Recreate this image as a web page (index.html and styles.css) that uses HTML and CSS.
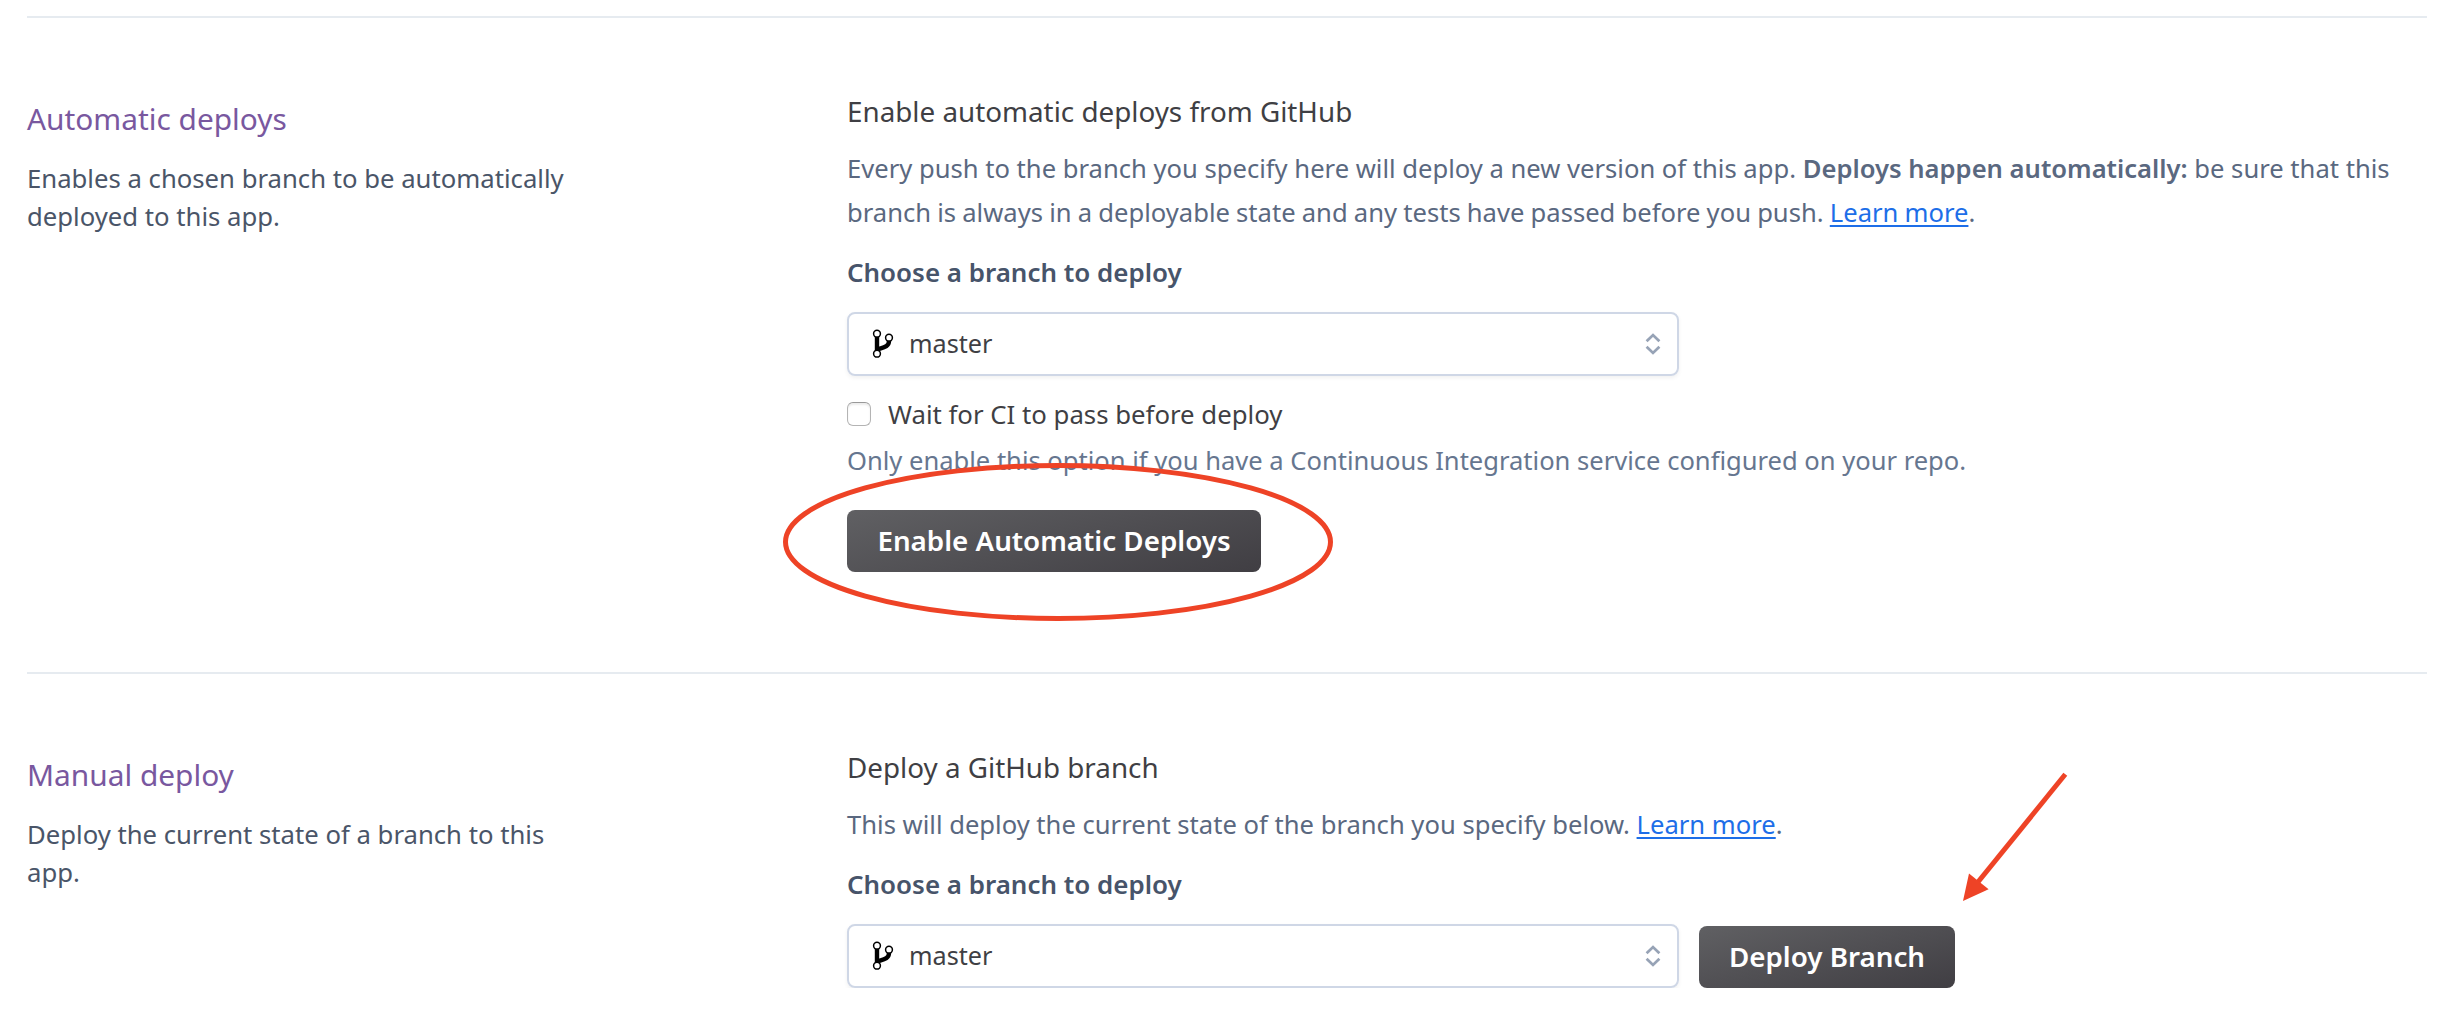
FILE: index.html
```html
<!DOCTYPE html>
<html lang="en">
<head>
<meta charset="utf-8">
<title>Deploy settings</title>
<link rel="stylesheet" href="styles.css">
</head>
<body>
<main class="page">
  <section class="panel">
    <div class="intro">
      <h2 class="title">Automatic deploys</h2>
      <p class="summary">Enables a chosen branch to be automatically<br>deployed to this app.</p>
    </div>
    <div class="content">
      <h3 class="heading">Enable automatic deploys from GitHub</h3>
      <p class="text">Every push to the branch you specify here will deploy a new version of this app. <strong>Deploys happen automatically:</strong> be sure that this<br><span class="tight">branch is always in a deployable state and any tests have passed before you push. <a class="link" href="#">Learn more</a>.</span></p>
      <div class="label">Choose a branch to deploy</div>
      <div class="select">
        <svg class="branch" width="22" height="30" viewBox="0 0 22 30">
          <path d="M5 7.5V22M17 12C17 18 11 18.500 5 20.500" fill="none" stroke="#000" stroke-width="4.400"/>
          <g fill="#fff" stroke="#000" stroke-width="1.500"><circle cx="5" cy="4.700" r="3.400"/><circle cx="17" cy="8.700" r="3.400"/><circle cx="5" cy="24.700" r="3.400"/></g>
        </svg>
        <span class="value">master</span>
        <svg class="arrows" width="16" height="22" viewBox="0 0 16 22"><path d="M1.600 8.200 8 2.100l6.400 6.100M1.600 13.800 8 19.900l6.400-6.100" fill="none" stroke="#97a3b6" stroke-width="2.800"/></svg>
      </div>
      <label class="check"><input class="box" type="checkbox">Wait for CI to pass before deploy</label>
      <p class="help">Only enable this option if you have a Continuous Integration service configured on your repo.</p>
      <button class="button wide">Enable Automatic Deploys</button>
    </div>
  </section>
  <section class="panel last">
    <div class="intro">
      <h2 class="title">Manual deploy</h2>
      <p class="summary">Deploy the current state of a branch to this<br>app.</p>
    </div>
    <div class="content">
      <h3 class="heading">Deploy a GitHub branch</h3>
      <p class="text">This will deploy the current state of the branch you specify below. <a class="link" href="#">Learn more</a>.</p>
      <div class="label">Choose a branch to deploy</div>
      <div class="row">
        <div class="select">
          <svg class="branch" width="22" height="30" viewBox="0 0 22 30">
            <path d="M5 7.5V22M17 12C17 18 11 18.500 5 20.500" fill="none" stroke="#000" stroke-width="4.400"/>
            <g fill="#fff" stroke="#000" stroke-width="1.500"><circle cx="5" cy="4.700" r="3.400"/><circle cx="17" cy="8.700" r="3.400"/><circle cx="5" cy="24.700" r="3.400"/></g>
          </svg>
          <span class="value">master</span>
          <svg class="arrows" width="16" height="22" viewBox="0 0 16 22"><path d="M1.600 8.200 8 2.100l6.400 6.100M1.600 13.800 8 19.900l6.400-6.100" fill="none" stroke="#97a3b6" stroke-width="2.800"/></svg>
        </div>
        <button class="button">Deploy Branch</button>
      </div>
    </div>
  </section>
</main>
<svg class="marks" width="2443" height="1016" viewBox="0 0 2443 1016">
  <ellipse cx="1058" cy="542" rx="272.500" ry="76.500" fill="none" stroke="#ee4326" stroke-width="5"/>
  <path d="M2065.300 774.300 1978 882" stroke="#ee4326" stroke-width="5"/>
  <path d="M1963 901 1969 873.500 1988.600 889.200z" fill="#ee4326"/>
</svg>
</body>
</html>
```
FILE: styles.css
```css
* { box-sizing: border-box; }
body {
  margin: 0;
  background: #fff;
  color: #3f3f44;
  font-family: "Noto Sans", "Open Sans", sans-serif;
}
h2, h3, p { margin: 0; font-weight: 400; }
.page { padding: 16px 16px 0 27px; }
.panel {
  display: grid;
  grid-template-columns: 820px 1fr;
  height: 656px;
  border-top: 2px solid #e6ebf0;
}
.last { height: auto; }
.intro { padding-top: 82px; }
.title { font-size: 29.85px; line-height: 37px; color: #79589f; }
.summary { margin-top: 23px; font-size: 25.7px; line-height: 38px; color: #4a5568; }
.content { padding-top: 75px; white-space: nowrap; }
.heading { font-size: 27.8px; line-height: 36px; color: #3f3f44; }
.text { margin-top: 18px; font-size: 25.6px; line-height: 44px; color: #5a6880; }
.text strong { font-weight: 600; }
.tight { word-spacing: -0.5px; }
.link {
  color: #1d6ee8;
  text-decoration: underline;
  text-decoration-thickness: 2px;
  text-underline-offset: 3px;
  text-decoration-skip-ink: none;
}
.label { margin-top: 21px; font-size: 25.95px; font-weight: 600; line-height: 32px; color: #47546a; }
.select {
  display: flex;
  align-items: center;
  width: 832px;
  height: 64px;
  margin-top: 24px;
  padding: 0 16px 0 23px;
  border: 2px solid #cfd7e6;
  border-radius: 8px;
  box-shadow: 0 2px 4px rgba(0, 0, 0, 0.06);
}
.branch { margin-right: 15px; }
.value { flex: 1; padding-bottom: 2px; font-size: 25.2px; line-height: 36px; }
.row { display: flex; align-items: flex-end; gap: 20px; }
.check {
  display: flex;
  align-items: center;
  height: 36px;
  margin-top: 20px;
  font-size: 25.75px;
}
.box {
  appearance: none;
  width: 24px;
  height: 24px;
  margin: 0 17px 0 0;
  border: 1.5px solid #b4b4b4;
  border-top-color: #999;
  border-radius: 6px;
  box-shadow: inset 0 2px 2px rgba(0, 0, 0, 0.08);
}
.help { margin-top: 10px; font-size: 25.55px; line-height: 36px; color: #66768f; }
.button {
  display: block;
  width: 256px;
  height: 62px;
  padding: 0 0 2px;
  border: 0;
  border-radius: 8px;
  background: linear-gradient(165deg, #606063, #403e43);
  color: #fff;
  font: 600 27.75px/60px "Noto Sans", "Open Sans", sans-serif;
}
.wide { width: 414px; margin-top: 32px; }
.marks { position: absolute; top: 0; left: 0; pointer-events: none; }
```
